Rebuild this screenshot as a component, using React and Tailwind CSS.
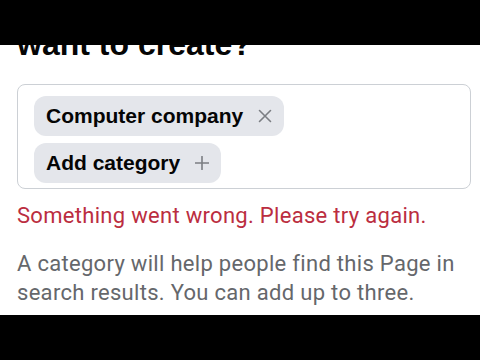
import React from "react";

function CloseIcon() {
  return (
    <svg width="14" height="14" viewBox="0 0 14 14" fill="none">
      <path d="M1.5 1.5L12.5 12.5M12.5 1.5L1.5 12.5" stroke="#7b7e83" strokeWidth="1.6" strokeLinecap="round" />
    </svg>
  );
}

function PlusIcon() {
  return (
    <svg width="14" height="14" viewBox="0 0 14 14" fill="none">
      <path d="M7 0.5V13.5M0.5 7H13.5" stroke="#7b7e83" strokeWidth="1.6" strokeLinecap="round" />
    </svg>
  );
}

export default function App() {
  const chips = [
    { label: "Computer company", icon: <CloseIcon /> },
    { label: "Add category", icon: <PlusIcon /> },
  ];

  return (
    <div className="w-[480px] h-[360px] flex flex-col bg-black">
      <div className="h-[45px] bg-black" />

      <div className="h-[270px] bg-white overflow-hidden px-[17px] font-['Roboto',sans-serif]">
        {/* heading, top half hidden behind the bar */}
        <h1 className="mt-[-20px] text-[32px] leading-[38px] font-bold text-[#050505] font-['Liberation_Sans',sans-serif]">
          want to create?
        </h1>

        <div className="mt-[21px] w-[454px] border border-[#ccd0d5] rounded-[8px] pl-[16px] pt-[11px] pb-[5px] flex flex-col items-start gap-[7px]">
          {chips.map((c) => (
            <div
              key={c.label}
              className="h-[40px] px-[12px] rounded-[12px] bg-[#e4e6eb] flex items-center gap-[15px]"
            >
              <span className="text-[21px] font-bold text-[#050505] font-['Liberation_Sans',sans-serif]">
                {c.label}
              </span>
              {c.icon}
            </div>
          ))}
        </div>

        <p className="mt-[13px] text-[22px] leading-[28px] tracking-[0.3px] text-[#bb2d40]">
          Something went wrong. Please try again.
        </p>

        <p className="mt-[19px] text-[22px] leading-[29px] tracking-[0.3px] text-[#65676b]">
          A category will help people find this Page in search results. You can add up to three.
        </p>
      </div>

      <div className="flex-1 bg-black" />
    </div>
  );
}
